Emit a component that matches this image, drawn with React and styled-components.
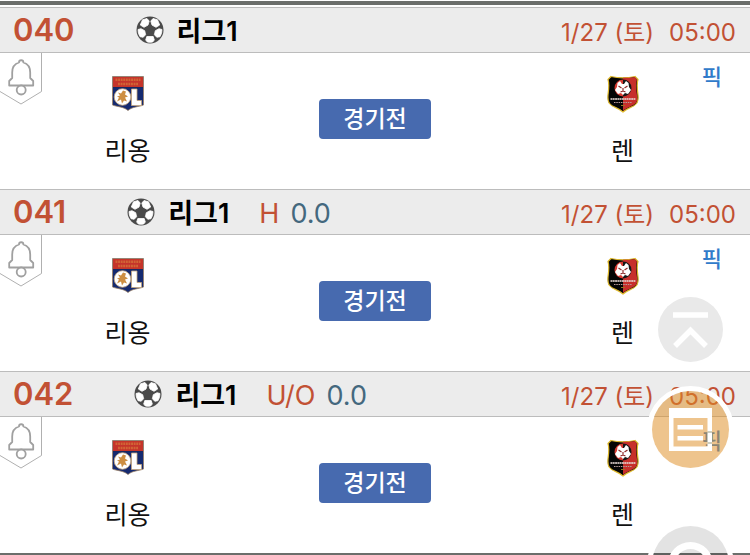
import React from "react";
import styled, { createGlobalStyle } from "styled-components";

const Global = createGlobalStyle`
  * { box-sizing: border-box; }
  body {
    margin: 0;
    background: #fff;
    color: #111;
    font-family: Inter, "Noto Sans CJK KR", sans-serif;
    overflow: hidden;
  }
`;

const Board = styled.main`
  margin-top: 1px;
  padding-top: 2px;
  border-top: 4px solid #6b6e6b;
  border-bottom: 4px solid #6b6e6b;
`;

const Game = styled.article`
  display: flex;
  flex-direction: column;
`;

const GameHeader = styled.header`
  display: flex;
  align-items: baseline;
  height: 46px;
  padding: 0 14px 0 13px;
  background: #ececec;
  border: solid #bcbcbc;
  border-width: 1px 0;
  line-height: 44px;
`;

const Number = styled.span`
  margin-right: 61px;
  color: #c25134;
  font-size: 31px;
  font-weight: 600;
`;

const League = styled.h2`
  display: flex;
  align-items: baseline;
  gap: 13px;
  margin: 0 30px 0 0;
  color: #000;
  font-size: 27px;
  font-weight: 600;
  svg {
    align-self: center;
    margin-bottom: 4px;
  }
`;

const Odds = styled.span`
  display: flex;
  gap: 11px;
  color: #c25134;
  font-size: 27px;
`;

const OddsValue = styled.span`
  color: #44687e;
`;

const Kickoff = styled.time`
  display: flex;
  align-items: baseline;
  gap: 15px;
  margin-left: auto;
  color: #c25134;
  font-size: 24px;
`;

const GameBody = styled.div`
  position: relative;
  display: grid;
  grid-template-columns: 34fr 32fr 34fr;
  height: 136px;
`;

const Team = styled.div`
  display: flex;
  flex-direction: column;
  align-items: center;
  gap: 22px;
  padding-top: 22px;
  font-size: 25px;
  line-height: 32px;
`;

const Status = styled.button`
  justify-self: center;
  width: 112px;
  height: 40px;
  margin-top: 46px;
  padding: 0;
  border: 0;
  border-radius: 4px;
  background: #476aaf;
  color: #fff;
  font: 500 23px/40px Inter, "Noto Sans CJK KR", sans-serif;
`;

const AlarmButton = styled.button`
  position: absolute;
  top: 0;
  left: 0;
  padding: 0;
  border: 0;
  background: none;
  svg { display: block; }
`;

const PickLink = styled.a`
  position: absolute;
  top: 8px;
  right: 28px;
  color: #317bca;
  font-size: 22px;
  font-weight: 500;
  line-height: 32px;
  text-decoration: none;
`;

const FloatingTools = styled.nav`
  position: fixed;
  top: 297px;
  right: 16px;
  display: flex;
  flex-direction: column;
  align-items: center;
`;

const RoundButton = styled.button`
  width: ${(p) => p.$size}px;
  height: ${(p) => p.$size}px;
  margin: 0 0 ${(p) => p.$after || 0}px;
  padding: 0;
  border: 0;
  background: none;
  svg { display: block; }
`;

const Ball = () => (
  <svg width="28" height="28" viewBox="0 0 28 28" aria-hidden="true">
    <circle cx="14" cy="14" r="13.5" fill="#4a4a4a" />
    <g fill="#fff" stroke="#fff" strokeWidth=".8" strokeLinejoin="round">
      <path d="M6.500 3.800 11 2.500l2.200 2.600-1.200 4-4 2.200-3.700-2.300z" />
      <path d="M21.500 3.800 17 2.500l-2.200 2.600 1.200 4 4 2.200 3.700-2.300z" />
      <path d="m2 13.500 3-.8 3.700 2 .9 4-2.400 2.600-3.200-.6a12 12 0 0 1-2-7.200z" />
      <path d="m26 13.500-3-.8-3.700 2-.9 4 2.400 2.600 3.200-.6a12 12 0 0 0 2-7.200z" />
      <path d="M10.800 20.500h6.400l1.100 3.500-1.600 2a13 13 0 0 1-5.400 0l-1.600-2z" />
    </g>
  </svg>
);

const Bell = () => (
  <svg width="43" height="53" viewBox="0 0 43 53" aria-hidden="true" fill="none">
    <path d="M41.500 0v38.500L21 51 0 38.500" stroke="#b0b0b0" />
    <path
      d="M19 9.500c0-3 4.400-3 4.400 0 4.600 1.300 6.800 5 6.800 10v5.500l3 3v4.500H9.200V28l3-3v-5.500c0-5 2.200-8.700 6.800-10z"
      stroke="#a0a0a0" strokeWidth="1.800" strokeLinejoin="round"
    />
    <circle cx="21.200" cy="37" r="4.500" fill="#fff" stroke="#a0a0a0" strokeWidth="1.800" />
  </svg>
);

const LyonCrest = () => (
  <svg width="32" height="38" viewBox="0 0 32 38" role="img" aria-label="리옹">
    <path d="M.5 1.500h31v28.500c-4 1.800-11 1.500-15.500 5.500C11.500 31.500 4.500 31.800.5 30z" fill="#152a70" stroke="#9a8065" strokeWidth=".8" />
    <path d="M1 2h30v10H1z" fill="#c5342a" />
    <path d="M3.500 4.800h25M6 9h20" stroke="#d97f3c" strokeWidth="2.600" strokeDasharray="1.900 .7" opacity=".65" />
    <path d="M1 12.500h30" stroke="#182760" />
    <circle cx="10.500" cy="22" r="8.300" fill="#fff" stroke="#c5a67c" strokeWidth=".8" />
    <path d="m6 17.500 3 1 2-3 3 1-1 3 3 2-3 1 2 4-3-1-2 3-1-4-4 2 2-4-2-1 3-1z" fill="#cd8e42" />
    <path d="M19.500 14H25v11.500h4.500v5h-10z" fill="#fff" stroke="#c5a67c" strokeWidth=".8" />
  </svg>
);

const RennesCrest = () => (
  <svg width="32" height="38" viewBox="0 0 32 38" role="img" aria-label="렌">
    <path d="M4 1.500c7 1.500 17 1.500 24 0l3 3c-3 9 3 19-1.500 24-3 4-9 4-13.500 8.500C11.500 32.500 5.500 32.500 2.500 28.500-2 23.500 4 13.500 1 4.500z" fill="#050505" stroke="#dfb92c" strokeWidth="1.200" />
    <path d="M16 2.800c4.500 0 8-.2 11.600-.9L30 4.500c-3 9 2.500 18.500-1 23.300-3 3.700-8.500 4-13 8.200z" fill="#c72f2b" />
    <path d="M16 4.500a8.500 8.500 0 0 0 0 17z" fill="#d63b32" />
    <path d="M16 4.500a8.500 8.500 0 0 1 0 17z" fill="#161616" />
    <path d="m10.500 8 2.500-2 2 3h2l2-3 2.500 2 .5 4 2 3-3 4-3-1-2 2-2-2-3 1-3-4 2-3z" fill="#fff" />
    <path d="m11.500 11 3 2M20.500 11l-3 2M16 13v3M13.500 17l2.500-1 2.500 1" stroke="#8f2a2a" strokeWidth="1.200" fill="none" />
    <path d="M3.500 24h25" stroke="#e5d6d2" strokeWidth="2.200" strokeDasharray="1.900 .4" opacity=".8" />
    <path d="M7 27.500h18" stroke="#b79b98" strokeDasharray="1.500 .8" />
    <path d="M14 30.500h4" stroke="#967223" />
  </svg>
);

const TopIcon = () => (
  <svg width="65" height="65" viewBox="0 0 65 65" aria-hidden="true">
    <circle cx="32.500" cy="32.500" r="32.500" fill="#e9e9e9" />
    <path d="M15 18h35M17 49l15.500-15.500L48 49" fill="none" stroke="#fff" strokeWidth="5.500" />
  </svg>
);

const ListIcon = () => (
  <svg width="87" height="87" viewBox="0 0 87 87" aria-hidden="true">
    <circle cx="43.500" cy="43.500" r="41" fill="none" stroke="#fff" strokeWidth="5" />
    <circle cx="43.500" cy="43.500" r="38.500" fill="#de8d24" fillOpacity=".52" />
    <path
      d="M22 22h43v43H22zM26.500 32v28.500h34V32zM30.500 39H56v4.500H30.500zM30.500 50H56v4.500H30.500z"
      fill="#fff" fillRule="evenodd"
    />
    <path d="M60.500 46H65M60.500 57H65" stroke="#8f9071" strokeWidth="1.500" opacity=".6" />
  </svg>
);

const RefreshIcon = () => (
  <svg width="87" height="87" viewBox="0 0 87 87" aria-hidden="true">
    <circle cx="43.500" cy="43.500" r="41" fill="none" stroke="#fff" strokeWidth="5" />
    <circle cx="43.500" cy="43.500" r="38.500" fill="#000" fillOpacity=".11" />
    <circle cx="43.500" cy="43.500" r="19" fill="none" stroke="#fff" strokeWidth="7" />
  </svg>
);

const games = [
  { id: "040" },
  { id: "041", type: "H", value: "0.0" },
  { id: "042", type: "U/O", value: "0.0" },
];

function GameRow({ id, type, value }) {
  return (
    <Game>
      <GameHeader>
        <Number>{id}</Number>
        <League><Ball />리그1</League>
        {type && <Odds>{type}<OddsValue>{value}</OddsValue></Odds>}
        <Kickoff><span>1/27 (토)</span><span>05:00</span></Kickoff>
      </GameHeader>
      <GameBody>
        <Team><LyonCrest />리옹</Team>
        <Status type="button">경기전</Status>
        <Team><RennesCrest />렌</Team>
        <AlarmButton type="button" aria-label="알림"><Bell /></AlarmButton>
        <PickLink href="#pick">픽</PickLink>
      </GameBody>
    </Game>
  );
}

export default function App() {
  return (
    <>
      <Global />
      <Board>
        {games.map((g) => <GameRow key={g.id} {...g} />)}
      </Board>
      <FloatingTools>
        <RoundButton type="button" $size={65} $after={24} aria-label="맨 위로"><TopIcon /></RoundButton>
        <RoundButton type="button" $size={87} $after={48} aria-label="목록"><ListIcon /></RoundButton>
        <RoundButton type="button" $size={87} aria-label="새로고침"><RefreshIcon /></RoundButton>
      </FloatingTools>
    </>
  );
}
